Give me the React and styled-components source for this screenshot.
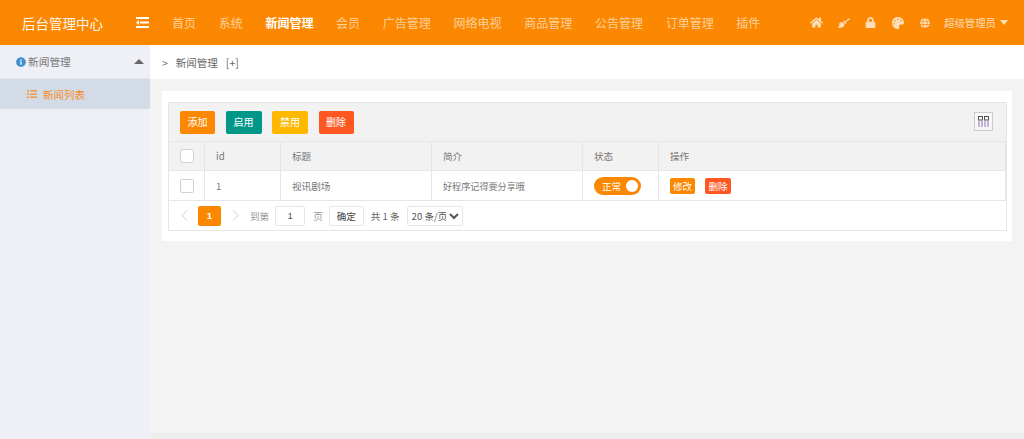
import React from 'react';
import styled, { createGlobalStyle } from 'styled-components';
import { FaHome, FaBroom, FaLock, FaPalette, FaGlobe, FaInfoCircle, FaListUl } from 'react-icons/fa';

const Global = createGlobalStyle`
  html, body { margin: 0; padding: 0; height: 100%; overflow: hidden; }
  body { font-family: "Liberation Sans", "Noto Sans CJK SC", sans-serif; color: #666; background: #f3f3f4; }
  #root { height: 100%; }
  * { box-sizing: border-box; }
`;

const Page = styled.div`display: flex; flex-direction: column; width: 1024px; height: 439px;`;
const Header = styled.header`display: flex; align-items: center; height: 45px; flex: none; background: #fb8800;`;
const Logo = styled.div`width: 136px; padding-left: 22px; color: #fff; opacity: .92; font-size: 13.5px; font-family: "Noto Sans CJK SC", sans-serif;`;
const Shrink = styled.svg`width: 13px; height: 11px; flex: none; color: #fff; margin-right: 23px;`;
const Nav = styled.nav`display: flex; align-items: center; gap: 22.7px;`;
const NavItem = styled.a`
  font-size: 12px; font-family: "Noto Sans CJK SC", sans-serif; white-space: nowrap;
  color: ${p => (p.$active ? '#fff' : 'rgba(255,255,255,.62)')};
  font-weight: ${p => (p.$active ? 700 : 400)};
`;
const HeaderRight = styled.div`margin-left: auto; display: flex; align-items: center; padding-right: 16px; color: rgba(255,255,255,.72);`;
const TopIcon = styled.span`display: flex; width: 27px; justify-content: center; font-size: ${p => p.$size || 11}px;`;
const User = styled.span`display: flex; align-items: center; margin-left: 6px; font-size: 10.4px; font-family: "Noto Sans CJK SC", sans-serif; white-space: nowrap;`;
const Caret = styled.i`
  display: inline-block; width: 0; height: 0; margin-left: 4px;
  border-left: 4px solid transparent; border-right: 4px solid transparent; border-top: 5px solid currentColor;
`;
const Body = styled.div`flex: 1; display: flex; min-height: 0;`;
const Side = styled.aside`width: 150px; flex: none; background: #eef0f5;`;
const SideHead = styled.div`display: flex; align-items: center; height: 34px; padding: 0 6px 0 16px; font-size: 10.7px; color: #777; gap: 2px; border-bottom: 1px solid #e4e7ed;`;
const SideTitle = styled.span`flex: 1; font-family: "Noto Sans CJK SC", sans-serif;`;
const UpCaret = styled.i`width: 0; height: 0; border-left: 5.5px solid transparent; border-right: 5.5px solid transparent; border-bottom: 5px solid #666;`;
const SideItem = styled.div`display: flex; align-items: center; height: 30px; padding-left: 27px; gap: 6px; background: #d2dbe6; color: #f98c1e; font-size: 10.5px; font-family: "Noto Sans CJK SC", sans-serif;`;
const Main = styled.main`flex: 1; display: flex; flex-direction: column; min-width: 0;`;
const Crumb = styled.div`display: flex; align-items: center; height: 34px; flex: none; padding: 0 0 0 12px; gap: 8px; background: #fff; font-size: 10.5px; color: #666; font-family: "Noto Sans CJK SC", sans-serif;`;
const Content = styled.div`flex: 1; padding: 12px 12px 0;`;
const Foot = styled.div`height: 6px; flex: none; background: #eeeeee;`;
const Card = styled.section`height: 150px; padding: 11px 5px 10px 6px; background: #fff;`;
const Table = styled.div`border: 1px solid #e6e6e6; height: 129px; display: flex; flex-direction: column;`;
const Toolbar = styled.div`display: flex; align-items: center; height: 38px; flex: none; padding: 0 11px; gap: 10.5px; background: #f2f2f2;`;
const Btn = styled.button`
  height: 23px; width: ${p => p.$w || 36}px; padding: 0 0 1px; border: 0; border-radius: 2px; color: #fff; font-size: 10px;
  font-family: "Noto Sans CJK SC", sans-serif; background: ${p => p.$bg};
`;
const ColsBtn = styled.div`margin: -2px 2px 0 auto; width: 19px; height: 19px; display: flex; align-items: center; justify-content: center; border: 1px solid #ccc; background: #f7f7f7;`;
const Row = styled.div`
  display: grid; grid-template-columns: 36px 76px 151px 151px 76px 1fr; flex: none;
  height: ${p => (p.$head ? 29 : 30)}px; border-top: 1px solid #e6e6e6;
  background: ${p => (p.$head ? '#f2f2f2' : '#fff')};
`;
const Cell = styled.div`
  display: flex; align-items: center; gap: 10px; padding-left: 11px; font-size: ${p => p.$size || 9.6}px; color: #777;
  font-family: "Noto Sans CJK SC", sans-serif; white-space: nowrap;
  border-right: 1px solid #e6e6e6;
`;
const Check = styled.span`width: 14px; height: 14px; background: #fff; border: 1px solid #d2d2d2; border-radius: 2px;`;
const Switch = styled.span`
  display: flex; align-items: center; justify-content: space-between; width: 47px; height: 18px; padding: 0 3px 0 8px;
  border-radius: 9px; background: #fb8800; color: #fff; font-size: 9.6px;
  &::after { content: ''; width: 12px; height: 12px; border-radius: 50%; background: #fff; }
`;
const Tag = styled.span`display: flex; align-items: center; justify-content: center; height: 16px; width: ${p => p.$w}px; border-radius: 2px; color: #fff; font-size: 9.6px; background: ${p => p.$bg};`;
const Pager = styled.div`display: flex; align-items: center; flex: 1; border-top: 1px solid #e6e6e6; padding-left: 12px; font-size: 9.6px; color: #888; font-family: "Noto Sans CJK SC", sans-serif;`;
const Chevron = styled.svg`width: 7px; height: 11px; flex: none; color: #ccc;`;
const Current = styled.span`display: flex; align-items: center; justify-content: center; width: 23px; height: 20px; margin: 0 11px 0 10px; border-radius: 2px; background: #fb8800; color: #fff; font-weight: 700; font-family: "Liberation Sans", sans-serif;`;
const Label = styled.span`margin-left: ${p => p.$ml || 0}px; color: ${p => (p.$dark ? '#666' : '#999')};`;
const PageInput = styled.span`display: flex; align-items: center; justify-content: center; width: 30px; height: 20px; margin: 0 8px 0 6px; border: 1px solid #e6e6e6; border-radius: 2px; color: #555; background: #fff; font-family: "Liberation Sans", sans-serif;`;
const Confirm = styled.span`display: flex; align-items: center; justify-content: center; width: 35px; height: 20px; margin-left: 6px; border: 1px solid #e6e6e6; border-radius: 2px; color: #444; background: #fff;`;
const Select = styled.select`width: 56px; height: 20px; margin-left: 7px; padding: 0; border: 1px solid #e6e6e6; border-radius: 2px; color: #555; background: #fff; font-size: 9.6px; font-family: "Noto Sans CJK SC", sans-serif;`;

const nav = ['首页', '系统', '新闻管理', '会员', '广告管理', '网络电视', '商品管理', '公告管理', '订单管理', '插件'];

export default function App() {
  return (
    <Page>
      <Global />
      <Header>
        <Logo>后台管理中心</Logo>
        <Shrink viewBox="0 0 13 11" fill="currentColor">
          <rect x="0" y="0" width="13" height="2" />
          <rect x="4" y="4.5" width="9" height="2" />
          <rect x="0" y="9" width="13" height="2" />
          <path d="M3 3v5L0 5.5z" />
        </Shrink>
        <Nav>
          {nav.map(n => <NavItem key={n} $active={n === '新闻管理'}>{n}</NavItem>)}
        </Nav>
        <HeaderRight>
          <TopIcon $size={13}><FaHome /></TopIcon>
          <TopIcon $size={12}><FaBroom /></TopIcon>
          <TopIcon><FaLock /></TopIcon>
          <TopIcon $size={12}><FaPalette /></TopIcon>
          <TopIcon $size={10}><FaGlobe /></TopIcon>
          <User>超级管理员<Caret /></User>
        </HeaderRight>
      </Header>
      <Body>
        <Side>
          <SideHead>
            <FaInfoCircle color="#3f8fd0" size={10} />
            <SideTitle>新闻管理</SideTitle>
            <UpCaret />
          </SideHead>
          <SideItem><FaListUl size={10} />新闻列表</SideItem>
        </Side>
        <Main>
          <Crumb><span>&gt;</span><span>新闻管理</span><span>[+]</span></Crumb>
          <Content>
            <Card>
              <Table>
                <Toolbar>
                  <Btn $bg="#fb8800" $w={35}>添加</Btn>
                  <Btn $bg="#009688">启用</Btn>
                  <Btn $bg="#ffb800">禁用</Btn>
                  <Btn $bg="#ff5722" $w={35}>删除</Btn>
                  <ColsBtn>
                    <svg width="11" height="11" viewBox="0 0 11 11" fill="none" stroke="#555" strokeWidth="1">
                      <rect x=".5" y=".5" width="4" height="3.5" />
                      <rect x="6.5" y=".5" width="4" height="3.5" />
                      <path d="M1 5v6M4 5v6M7 5v6M10 5v6" stroke="#8a76b0" />
                    </svg>
                  </ColsBtn>
                </Toolbar>
                <Row $head>
                  <Cell><Check /></Cell>
                  <Cell>id</Cell><Cell>标题</Cell><Cell>简介</Cell><Cell>状态</Cell><Cell>操作</Cell>
                </Row>
                <Row>
                  <Cell><Check /></Cell>
                  <Cell>1</Cell><Cell>视讯剧场</Cell><Cell $size={9.1}>好程序记得要分享哦</Cell>
                  <Cell><Switch>正常</Switch></Cell>
                  <Cell>
                    <Tag $bg="#fb8800" $w={25}>修改</Tag>
                    <Tag $bg="#ff5722" $w={26}>删除</Tag>
                  </Cell>
                </Row>
                <Pager>
                  <Chevron viewBox="0 0 7 11" fill="none" stroke="currentColor"><path d="M6 .5L1 5.5l5 5" /></Chevron>
                  <Current>1</Current>
                  <Chevron viewBox="0 0 7 11" fill="none" stroke="currentColor"><path d="M1 .5l5 5-5 5" /></Chevron>
                  <Label $ml={11}>到第</Label>
                  <PageInput>1</PageInput>
                  <Label>页</Label>
                  <Confirm>确定</Confirm>
                  <Label $ml={7} $dark>共 1 条</Label>
                  <Select defaultValue="20"><option value="20">20 条/页</option></Select>
                </Pager>
              </Table>
            </Card>
          </Content>
          <Foot />
        </Main>
      </Body>
    </Page>
  );
}
